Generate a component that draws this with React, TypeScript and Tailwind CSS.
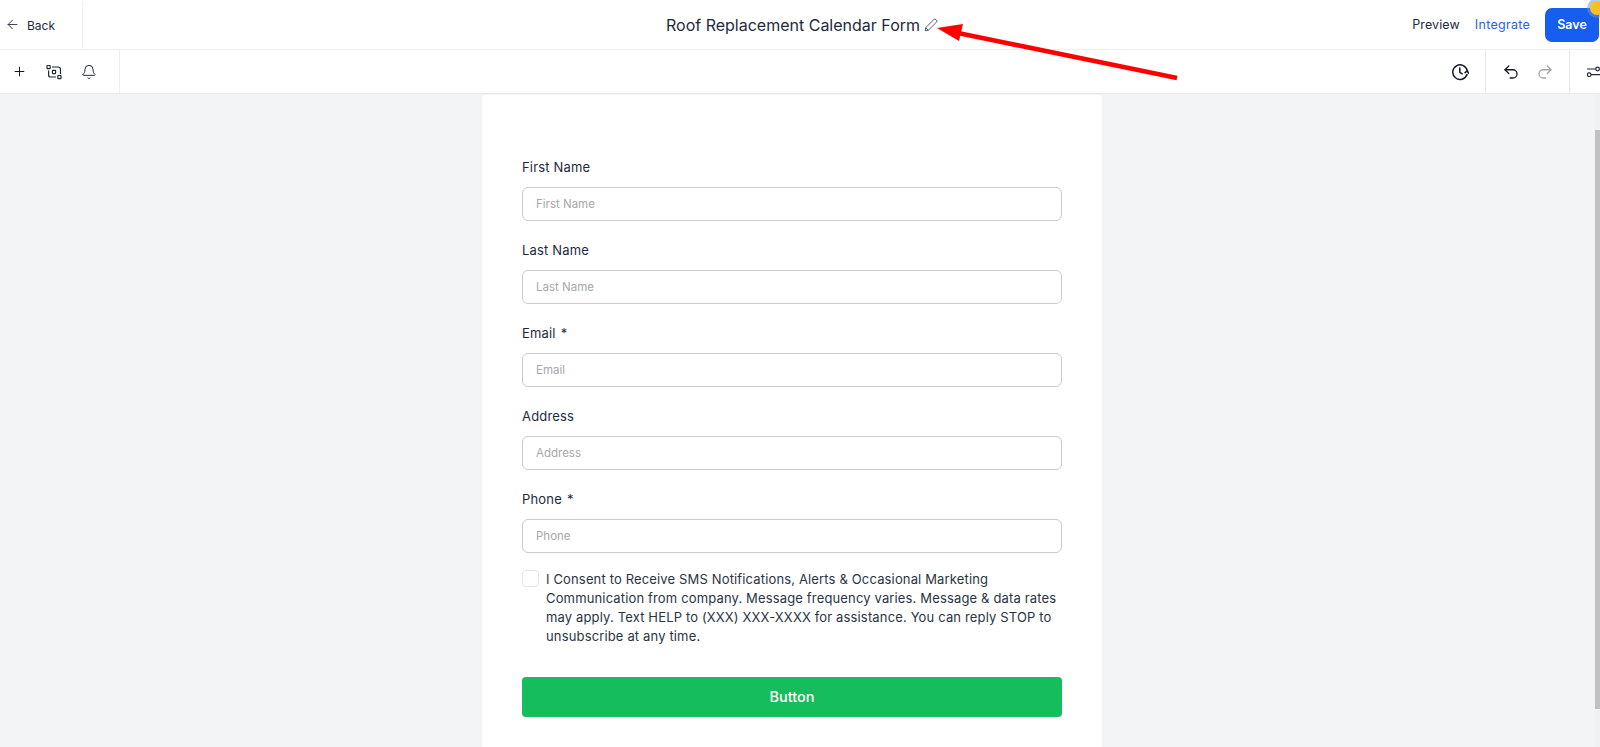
import React from "react";
import { ArrowLeft, Plus, Bell, Undo2, Redo2 } from "lucide-react";

function Field({ label, req }: { label: string; req?: boolean }) {
  return (
    <div className="h-[83px] flex flex-col">
      <div className="h-[20px] flex items-center text-[13px] tracking-[0.17px] leading-[20px] text-[#1f2a3d]">
        {label}
        {req && <span className="ml-[5px]">*</span>}
      </div>
      <div className="mt-[10px] h-[34px] rounded-[6px] border border-[#c9cbcf] bg-white px-[13px] pt-[2px] flex items-center text-[11.5px] text-[#a6a8ac]">
        {label}
      </div>
    </div>
  );
}

function SelectIcon() {
  return (
    <svg width="16" height="16" viewBox="0 0 16 16" fill="none" stroke="#1f2937" strokeWidth="1.2">
      <rect x="1" y="1.5" width="3.2" height="3.2" rx="0.5" />
      <rect x="6.4" y="6.4" width="3.2" height="3.2" rx="0.5" />
      <rect x="11.8" y="11.5" width="3.2" height="3.2" rx="0.5" />
      <path d="M6 3h6a2.5 2.5 0 0 1 2.5 2.5V10" />
      <path d="M2.6 6.5V11a2 2 0 0 0 2 2H10" />
    </svg>
  );
}

function HistoryIcon() {
  return (
    <svg width="18" height="18" viewBox="0 0 18 18" fill="none" stroke="#111827" strokeWidth="1.5" strokeLinecap="round" strokeLinejoin="round">
      <path d="M16 11.5A7.3 7.3 0 1 1 16.3 8" />
      <path d="M8.8 5v4.3l2.4 1.5" />
      <path d="M14 9.6l2.3-1.7 1.2 2.3" />
    </svg>
  );
}

function FlowIcon() {
  return (
    <svg width="16" height="16" viewBox="0 0 16 16" fill="none" stroke="#1f2937" strokeWidth="1.2">
      <circle cx="2.2" cy="10.7" r="1.8" />
      <circle cx="10.6" cy="5" r="1.8" />
      <path d="M0 5h8.8M4 10.7h12" />
    </svg>
  );
}

function PenIcon() {
  return (
    <svg width="14" height="14" viewBox="0 0 14 14" fill="none" stroke="#55606f" strokeWidth="1" strokeLinejoin="round">
      <path d="M1.2 12.8l.5-3.1L9.8 1.6a1.5 1.5 0 0 1 2.2 0l.4.4a1.5 1.5 0 0 1 0 2.2L4.3 12.3z" />
      <path d="M1.7 9.7l2.6 2.6" />
    </svg>
  );
}

export default function App() {
  return (
    <div
      className="relative h-[747px] w-[1600px] overflow-hidden bg-[#f3f4f6] flex flex-col"
      style={{ fontFamily: "Inter, 'Noto Sans', sans-serif" }}
    >
      <header className="h-[50px] shrink-0 bg-white border-b border-[#eeeff1] grid grid-cols-[1fr_auto_1fr] items-center">
        <div className="h-full flex items-center">
          <div className="w-[83px] h-[48px] border-r border-[#eeeff1] flex items-center pl-[5px] gap-[7px] text-[12px] text-[#1f2a3d]">
            <ArrowLeft size={15} strokeWidth={1.4} />
            <span className="pt-[2px]">Back</span>
          </div>
        </div>
        <div className="flex items-center ml-[4px] gap-[4px] text-[16px] text-[#1f2a3d]">
          <span className="pt-px">Roof Replacement Calendar Form</span>
          <PenIcon />
        </div>
        <div className="flex items-center justify-end h-full text-[12.5px]">
          <span className="pt-[2px] text-[#1f2a3d] tracking-[0.1px]">Preview</span>
          <span className="pt-[2px] ml-[15px] text-[#2563eb] tracking-[0.28px]">Integrate</span>
          <div className="relative ml-[15px] mr-px w-[54px] h-[34px] pt-[2px] rounded-[7px] bg-[#155eef] text-white font-semibold text-[12.5px] flex items-center justify-center">
            Save
            <span className="absolute right-[-5px] top-[-7px] w-[14px] h-[14px] rounded-full bg-[#fbbf24] ring-[3px] ring-[#6b8fd8]/50"></span>
          </div>
        </div>
      </header>

      <div className="h-[44px] shrink-0 bg-white border-b border-[#e9eaec] flex items-stretch justify-between">
        <div className="w-[120px] border-r border-[#eeeff1] flex items-center pl-[12px] gap-[19px]">
          <Plus size={15} strokeWidth={1.6} color="#111827" />
          <SelectIcon />
          <Bell size={16} strokeWidth={1.5} color="#1f2937" />
        </div>
        <div className="flex items-stretch">
          <div className="w-[59px] flex items-center pr-[16px] justify-end">
            <HistoryIcon />
          </div>
          <div className="w-[85px] border-l border-r border-[#e6e7e9] flex items-center pl-[16px] gap-[16px]">
            <Undo2 size={18} strokeWidth={1.7} color="#111827" />
            <Redo2 size={18} strokeWidth={1.7} color="#9ca3af" />
          </div>
          <div className="w-[30px] flex items-center pl-[17px]">
            <span className="shrink-0">
              <FlowIcon />
            </span>
          </div>
        </div>
      </div>

      <div className="flex-1 flex min-h-0">
        <main className="flex-1 flex justify-center min-w-0">
          <section className="ml-[-10px] mt-[1px] w-[620px] h-[700px] bg-white rounded-t-[3px] shadow-[0_0_2px_rgba(0,0,0,0.04)] pt-[62px] px-[40px]">
            <Field label="First Name" />
            <Field label="Last Name" />
            <Field label="Email" req />
            <Field label="Address" />
            <Field label="Phone" req />
            <div className="mt-[-2px] flex">
              <div className="w-[17px] h-[17px] shrink-0 rounded-[4px] border border-[#e4e5e8] bg-white"></div>
              <p className="ml-[7px] w-[520px] text-[13px] tracking-[0.15px] leading-[19px] text-[#2b3442]">
                I Consent to Receive SMS Notifications, Alerts &amp; Occasional Marketing Communication from company. Message frequency varies. Message &amp; data rates may apply. Text HELP to (XXX) XXX-XXXX for assistance. You can reply STOP to unsubscribe at any time.
              </p>
            </div>
            <button className="mt-[31px] w-full h-[40px] rounded-[4px] bg-[#16bd5d] text-white text-[14.5px] font-medium flex items-center justify-center">
              Button
            </button>
          </section>
        </main>
        <div className="w-[6px] shrink-0 bg-[#f1f1f1] pl-px">
          <div className="mt-[36px] h-[579px] w-[5px] bg-[#c1c1c1]"></div>
        </div>
      </div>

      <svg className="absolute left-0 top-0 pointer-events-none" width="1600" height="100" viewBox="0 0 1600 100">
        <path d="M1177 78L958 33" stroke="#ff0000" strokeWidth="4.5" fill="none" />
        <polygon points="937,28 963,24 959,41" fill="#ff0000" />
      </svg>
    </div>
  );
}
